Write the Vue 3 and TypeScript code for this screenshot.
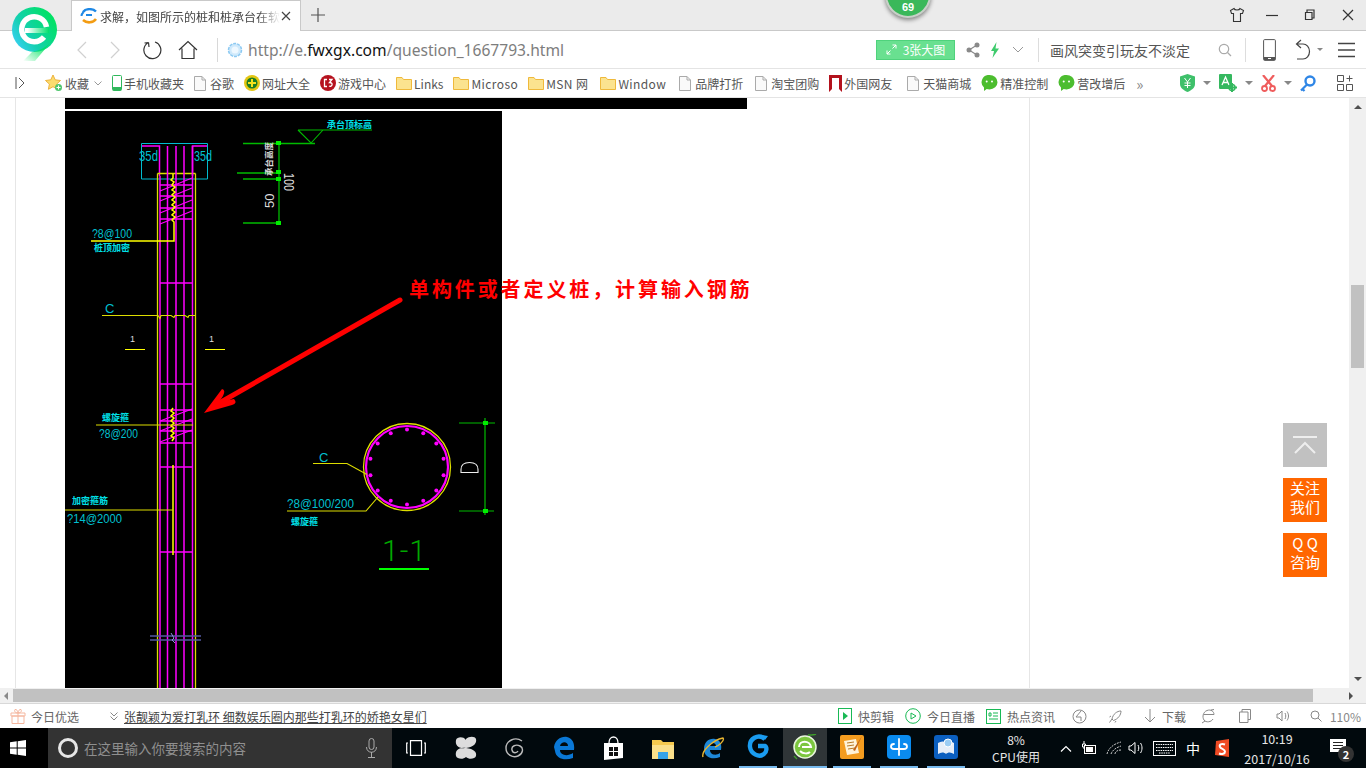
<template>
  <div class="screen">
    <!-- browser tab strip -->
    <header class="tab-strip">
      <div class="tab">
        <svg class="tab-icon" width="18" height="16" viewBox="0 0 18 16">
          <path d="M16 3.5C13 .5 6 0 3 4" fill="none" stroke="#1e88e5" stroke-width="2.4" />
          <path d="M1.5 8c0-2 1-3 2-4M6 7h6" fill="none" stroke="#1e88e5" stroke-width="2" />
          <path d="M3 12c4 3.5 10 3 13-1" fill="none" stroke="#f39c12" stroke-width="2.6" />
        </svg>
        <span class="tab-title">求解，如图所示的桩和桩承台在软</span>
        <svg width="10" height="10" viewBox="0 0 10 10" class="tab-close">
          <path d="M1 1l8 8M9 1l-8 8" stroke="#444" stroke-width="1.2" />
        </svg>
      </div>
      <svg class="tab-add" width="14" height="14" viewBox="0 0 14 14">
        <path d="M7 0v14M0 7h14" stroke="#555" stroke-width="1.2" />
      </svg>
      <div class="window-buttons">
        <svg class="skin" width="16" height="16" viewBox="0 0 16 16">
          <path d="M5 1.5L1.5 3.5l1 3H4.5v8h7v-8h2l1-3L11 1.5c-.5 2-5.5 2-6 0z" fill="none" stroke="#333" stroke-width="1.1" />
        </svg>
        <svg width="12" height="12" viewBox="0 0 12 12"><path d="M0 6.5h12" stroke="#333" stroke-width="1.2" /></svg>
        <svg width="12" height="12" viewBox="0 0 12 12">
          <path d="M3 3V1h7v8H8M1.5 3.5H8v7H1.500z" fill="none" stroke="#333" stroke-width="1.2" />
        </svg>
        <svg width="12" height="12" viewBox="0 0 12 12"><path d="M1 1l10 10M11 1L1 11" stroke="#333" stroke-width="1.2" /></svg>
      </div>
    </header>

    <!-- address bar -->
    <div class="address-bar">
      <div class="nav-buttons">
        <svg width="12" height="18" viewBox="0 0 12 18"><path d="M10 1L2 9l8 8" fill="none" stroke="#d0d0d0" stroke-width="1.2" /></svg>
        <svg width="12" height="18" viewBox="0 0 12 18"><path d="M2 1l8 8-8 8" fill="none" stroke="#d0d0d0" stroke-width="1.2" /></svg>
        <svg width="20" height="20" viewBox="0 0 20 20">
          <path d="M6.5 2.500A8.5 8.5 0 1 0 13 2M6.5 2.500L7 7M6.5 2.500L2.500 3" fill="none" stroke="#333" stroke-width="1.2" />
        </svg>
        <svg class="home" width="20" height="20" viewBox="0 0 20 20">
          <path d="M1 10l9-8.5 9 8.500M4 8.500V18.500h12V8.500" fill="none" stroke="#333" stroke-width="1.2" />
        </svg>
      </div>
      <div class="url-box">
        <svg width="16" height="16" viewBox="0 0 16 16">
          <circle cx="8" cy="8" r="6.5" fill="#cfe9fb" stroke="#8cc9f2" stroke-width="1.5" stroke-dasharray="3 1" />
          <circle cx="8" cy="8" r="3.5" fill="#eef8ff" />
        </svg>
        <span class="url"><span class="url-dim">http://e.</span><span class="url-host">fwxgx.com</span><span class="url-dim">/question_1667793.html</span></span>
      </div>
      <div class="big-image">
        <svg width="11" height="11" viewBox="0 0 11 11"><path d="M6.5 1H10v3.500M10 1L6.500 4.500M4.500 10H1V6.500M1 10l3.500-3.500" fill="none" stroke="#fff" /></svg>
        <span>3张大图</span>
      </div>
      <svg class="share" width="14" height="16" viewBox="0 0 14 16">
        <circle cx="11" cy="3" r="2.5" fill="#8a8a8a" /><circle cx="3" cy="8" r="2.5" fill="#8a8a8a" /><circle cx="11" cy="13" r="2.5" fill="#8a8a8a" />
        <path d="M11 3L3 8l8 5" fill="none" stroke="#8a8a8a" stroke-width="1.2" />
      </svg>
      <svg class="bolt" width="10" height="16" viewBox="0 0 10 16"><path d="M6.500 0L1 9h3L2.500 16 9 6.500H5.500z" fill="#3ecb6c" /></svg>
      <svg class="chev" width="12" height="7" viewBox="0 0 12 7"><path d="M1 1l5 5 5-5" fill="none" stroke="#999" /></svg>
      <div class="search-text">画风突变引玩友不淡定</div>
      <svg class="magnifier" width="14" height="14" viewBox="0 0 14 14">
        <circle cx="6" cy="6" r="4.7" fill="none" stroke="#aaa" stroke-width="1.2" /><path d="M9.500 9.500L13 13" stroke="#aaa" stroke-width="1.2" />
      </svg>
      <div class="tool-sep"></div>
      <svg class="phone" width="13" height="22" viewBox="0 0 13 22">
        <rect x=".6" y=".6" width="11.8" height="20.8" rx="1" fill="none" stroke="#555" stroke-width="1" />
        <path d="M1 18h11v3H1z" fill="#555" /><rect x="5" y="19" width="3" height="1" fill="#fff" />
      </svg>
      <svg class="undo" width="18" height="22" viewBox="0 0 18 22">
        <path d="M7 1L2.500 5 7 9M2.500 5H9a6.500 7.500 0 0 1 0 15H3" fill="none" stroke="#444" stroke-width="1.2" />
      </svg>
      <span class="caret small"></span>
      <svg class="menu" width="17" height="16" viewBox="0 0 17 16"><path d="M0 1.500h17M0 8h17M0 14.500h17" stroke="#444" stroke-width="1.3" /></svg>
    </div>

    <!-- bookmarks -->
    <nav class="bookmarks">
      <svg class="expand" width="10" height="12" viewBox="0 0 10 12"><path d="M1 0v12M4 1l5 5-5 5" fill="none" stroke="#555" /></svg>
      <div v-for="mark in marks" :key="mark.label" class="mark" :class="mark.kind">
        <svg v-if="mark.kind === 'star'" width="18" height="18" viewBox="0 0 18 18">
          <path d="M8 1l2.200 4.800 5.300.7-3.900 3.600 1 5.200L8 12.700l-4.600 2.600 1-5.200L.5 6.500l5.300-.7z" fill="#fbdc6f" stroke="#edb23c" />
          <circle cx="13.5" cy="13.5" r="3.5" fill="#4fc66d" /><path d="M13.500 11.500v4M11.500 13.500h4" stroke="#fff" />
        </svg>
        <svg v-else-if="mark.kind === 'phone-mark'" width="10" height="16" viewBox="0 0 10 16">
          <rect x=".5" y=".5" width="9" height="15" rx="1" fill="none" stroke="#30b85c" /><path d="M1 12h8v3.500H1z" fill="#30b85c" />
        </svg>
        <svg v-else-if="mark.kind === 'doc'" width="12" height="15" viewBox="0 0 12 15">
          <path d="M.5.500H8L11.500 4v10.500H.5z" fill="#fafafa" stroke="#aaa" /><path d="M8 .5V4h3.500" fill="none" stroke="#aaa" />
        </svg>
        <svg v-else-if="mark.kind === 'yellow'" width="16" height="16" viewBox="0 0 16 16">
          <circle cx="8" cy="8" r="8" fill="#e3c613" /><circle cx="8" cy="8" r="5.5" fill="#1d7d22" /><path d="M8 4v8M4 8h8" stroke="#f6e21b" stroke-width="2" />
        </svg>
        <svg v-else-if="mark.kind === 'game'" width="16" height="16" viewBox="0 0 16 16">
          <circle cx="8" cy="8" r="8" fill="#b6131f" /><path d="M7 4.500H4.500v7H7M9 4.500h3L9.500 7.500c2 0 3 1 2.500 2.500s-2 1.500-3 1" fill="none" stroke="#fff" stroke-width="1.3" />
        </svg>
        <svg v-else-if="mark.kind === 'folder'" width="16" height="14" viewBox="0 0 16 14">
          <path d="M.5 1.500h5.500l1.500 2h8v10H.5z" fill="#fbe38f" stroke="#efb93b" />
        </svg>
        <svg v-else-if="mark.kind === 'ribbon'" width="13" height="17" viewBox="0 0 13 17">
          <path d="M0 0h13v17l-3-3V3H3v11l-3 3z" fill="#b3121d" />
        </svg>
        <svg v-else-if="mark.kind === 'chat'" width="17" height="16" viewBox="0 0 17 16">
          <path d="M8.500 0a8 7.200 0 0 1 0 14.400c-1 0-2-.2-2.800-.5L3 16v-3.500A7.200 7.200 0 0 1 8.500 0z" fill="#4cbd2f" />
          <circle cx="5.7" cy="6.5" r="1" fill="#fff" /><circle cx="11" cy="6.5" r="1" fill="#fff" />
        </svg>
        <span>{{ mark.label }}</span>
        <svg v-if="mark.kind === 'star'" class="mark-chev" width="8" height="5" viewBox="0 0 8 5"><path d="M.5.500L4 4 7.500.5" fill="none" stroke="#999" /></svg>
      </div>
      <span class="more">»</span>
      <div class="plugins">
        <svg width="15" height="18" viewBox="0 0 15 18"><path d="M7.500 0L15 2.500V10c0 4-4 6.500-7.500 8C4 16.500 0 14 0 10V2.500z" fill="#3ec06a" /><path d="M4.500 4l3 4 3-4M7.500 8v6M4.500 9h6M4.500 11.500h6" fill="none" stroke="#fff" /></svg>
        <span class="caret"></span>
        <svg width="18" height="18" viewBox="0 0 18 18"><rect width="13" height="15" rx="1" fill="#35b85f" /><path d="M3 11l3.500-8L10 11M4.500 8.500h4" fill="none" stroke="#fff" stroke-width="1.3" /><path d="M13 9v9M9 13.500h9" stroke="#35b85f" stroke-width="2" /><circle cx="13" cy="13.5" r="3" fill="none" stroke="#35b85f" stroke-width="1.5" /></svg>
        <span class="caret"></span>
        <svg width="15" height="17" viewBox="0 0 15 17"><path d="M2 0l9 11M13 0L4 11" stroke="#ef5d5d" stroke-width="2.2" /><circle cx="3.5" cy="13.5" r="2.5" fill="none" stroke="#ef5d5d" stroke-width="1.8" /><circle cx="11.5" cy="13.5" r="2.5" fill="none" stroke="#ef5d5d" stroke-width="1.8" /></svg>
        <span class="caret"></span>
        <svg width="16" height="17" viewBox="0 0 16 17"><circle cx="10" cy="6" r="4.5" fill="none" stroke="#2f86e6" stroke-width="2.4" /><path d="M7 9.500L1 15.500M2.500 14l2 2" stroke="#2f86e6" stroke-width="2.2" /></svg>
        <svg class="grid-icon" width="16" height="16" viewBox="0 0 16 16"><path d="M.5.500h6v6h-6zM.5 9.500h6v6h-6zM9.500 9.500h6v6h-6zM12.500.5v6M9.500 3.500h6" fill="none" stroke="#555" /></svg>
      </div>
    </nav>

    <!-- page viewport -->
    <div class="viewport">
      <main class="page">
        <div class="column">
          <div class="black-strip"></div>
          <div class="figure">
            <svg class="cad" width="437" height="577" viewBox="65 111 437 577" role="img">
              <rect x="65" y="111" width="437" height="577" fill="#000" />

              <!-- cap -->
              <path d="M141.500 143.500h66v35.500h-66z" fill="none" stroke="#00bcd0" />
              <path d="M142 146h17.500v30M207 146h-14.500v30" fill="none" stroke="#f0f" stroke-width="1.5" />
              <text x="139" y="161" class="cad-label cad-35" textLength="19" lengthAdjust="spacingAndGlyphs">35d</text>
              <text x="194" y="161" class="cad-label cad-35" textLength="18" lengthAdjust="spacingAndGlyphs">35d</text>

              <!-- pile body -->
              <path d="M157.500 173.500h38M157.500 173.500V688M195.500 173.500V688" fill="none" stroke="#dddd00" stroke-width="1.3" />
              <path d="M160 176V688M167.500 146V688M176 146V688M184 146V688M192.500 146V688" fill="none" stroke="#f0f" stroke-width="1.5" />
              <path v-for="y in ties" :key="y" :d="`M160 ${y}H193`" stroke="#f0f" stroke-width="1.5" />
              <path v-for="y in [196, 208, 219, 186]" :key="'s' + y" :d="`M160 ${y + 5}L192 ${y - 8}`" stroke="#f0f" stroke-width="1.3" />
              <path v-for="y in [421, 431, 442]" :key="'l' + y" :d="`M160 ${y}L192 ${y - 12}`" stroke="#f0f" stroke-width="1.3" />
              <path d="M173 174v4l-2 2 3 2-2 3 3 2-3 3 3 2-3 3 3 2-3 3 3 2-3 3 3 2-3 3 3 2-3 3 3 2-3 3 2 2V241H91" fill="none" stroke="#ff0" stroke-width="1.5" />
              <path d="M173 408l-2 3 3 2-3 3 3 2-3 3 3 2-3 3 3 2-3 3 3 2-3 3 3 2-2 3M173 465v90" fill="none" stroke="#ff0" stroke-width="1.5" />
              <path d="M102 315.500h56l2 3 1-3h10l3 2 1-2h10l3 2 1-2h6" fill="none" stroke="#dddd00" stroke-width="1.1" />
              <path d="M96 425h97M65 510h108" stroke="#dddd00" stroke-width="1.2" />
              <path d="M150 636h51M150 640h51" stroke="#5458a0" stroke-width="1.3" />
              <path d="M171 633l3 5-2 2 3 3" fill="none" stroke="#8c8ce0" />

              <!-- pile labels -->
              <text x="92" y="238" class="cad-label" textLength="40" lengthAdjust="spacingAndGlyphs">?8@100</text>
              <text x="94" y="251" class="cad-cjk">桩顶加密</text>
              <text x="105" y="313" class="cad-label">C</text>
              <text x="130" y="342" class="cad-one">1</text>
              <text x="209" y="342" class="cad-one">1</text>
              <path d="M125 349.500h20M205 349.500h20" stroke="#ff0" />
              <text x="102" y="421" class="cad-cjk">螺旋箍</text>
              <text x="99" y="438" class="cad-label" textLength="39" lengthAdjust="spacingAndGlyphs">?8@200</text>
              <text x="72" y="504" class="cad-cjk">加密箍筋</text>
              <text x="67" y="523" class="cad-label" textLength="55" lengthAdjust="spacingAndGlyphs">?14@2000</text>

              <!-- top dimensions -->
              <path d="M298 130h74M298 130l13 13 12-13" fill="none" stroke="#0b0" stroke-width="1.1" />
              <path d="M243 143.500h72M237 173h43M243 179h37M243 223h37M279 141v83" fill="none" stroke="#0b0" stroke-width="1.3" />
              <path d="M276 141h5v4h-5zM276 170h5v4h-5zM276 177h5v4h-5zM276 221h5v4h-5z" fill="#0e0" />
              <text x="327" y="128" class="cad-cjk">承台顶标高</text>
              <text transform="translate(272 176) rotate(-90)" class="cad-white small">承台高度</text>
              <text transform="translate(284 173) rotate(90)" class="cad-white big" textLength="18" lengthAdjust="spacingAndGlyphs">100</text>
              <text transform="translate(274 208) rotate(-90)" class="cad-white">50</text>

              <!-- section 1-1 -->
              <circle cx="407" cy="467" r="43.5" fill="none" stroke="#dddd00" stroke-width="1.3" />
              <circle cx="407" cy="467" r="41" fill="none" stroke="#f0f" stroke-width="2.2" />
              <circle v-for="dot in bars" :key="dot.a" :cx="dot.x" :cy="dot.y" r="2" fill="#f0f" />
              <path d="M313 463.500h34l20 11M287 511h79l12-14" fill="none" stroke="#dddd00" stroke-width="1.1" />
              <text x="319" y="462" class="cad-label">C</text>
              <text x="287" y="508" class="cad-label" textLength="67" lengthAdjust="spacingAndGlyphs">?8@100/200</text>
              <text x="291" y="525" class="cad-cjk">螺旋箍</text>
              <text x="382" y="561" class="cad-title" textLength="44">1-1</text>
              <path d="M379 569h50" stroke="#0f0" stroke-width="2" />
              <path d="M459 423h36M459 511h35M485 418v97" fill="none" stroke="#0b0" stroke-width="1.2" />
              <path d="M483 421h5v4h-5zM483 509h5v4h-5z" fill="#0e0" />
              <path d="M461 472.500h17v-3c0-5-4-7-8.500-7s-8.500 2-8.500 7z" fill="none" stroke="#eee" stroke-width="1.1" />

              <!-- hand drawn arrow -->
              <path d="M400 300L214 406" stroke="#f00" stroke-width="5" stroke-linecap="round" />
              <path d="M204 413L222 389Q226 390 223 396L219 402L234 399Q238 403 232 405Z" fill="#f00" />
            </svg>
            <div class="note">单构件或者定义桩，计算输入钢筋</div>
          </div>
        </div>
      </main>

      <aside class="side-actions">
        <div class="action to-top">
          <svg width="24" height="18" viewBox="0 0 24 18"><path d="M0 1h24M2 17L12 7l10 10" fill="none" stroke="#eee" stroke-width="2" /></svg>
        </div>
        <div class="action">关注<br />我们</div>
        <div class="action">Q Q<br />咨询</div>
      </aside>

      <div class="v-scroll">
        <span class="arrow up"></span>
        <div class="v-track"><div class="v-thumb"></div></div>
        <span class="arrow down"></span>
      </div>
    </div>

    <div class="h-scroll">
      <span class="arrow left"></span>
      <div class="h-track"><div class="h-thumb"></div></div>
      <span class="arrow right"></span>
    </div>

    <!-- browser status bar -->
    <footer class="status-bar">
      <svg class="gift" width="16" height="16" viewBox="0 0 16 16"><path d="M1 5h14v3H1zM2 8h12v7.500H2zM8 5v10.500M8 5C5 5 4 3 5 1.500 6.500 1 8 3 8 5c0-2 1.500-4 3-3.500C12 3 11 5 8 5z" fill="none" stroke="#f5b79f" /></svg>
      <span class="today">今日优选</span>
      <svg class="news-chev" width="8" height="9" viewBox="0 0 8 9"><path d="M.5.500L4 4 7.500.5M.5 4.500L4 8l3.500-3.500" fill="none" stroke="#888" /></svg>
      <a class="headline">张靓颖为爱打乳环 细数娱乐圈内那些打乳环的娇艳女星们</a>
      <div class="status-tools">
        <div class="tool">
          <svg width="14" height="16" viewBox="0 0 14 16"><rect x=".5" y=".5" width="13" height="15" fill="none" stroke="#19b955" /><path d="M5 4l5 4-5 4z" fill="#19b955" /></svg>
          <span>快剪辑</span>
        </div>
        <div class="tool">
          <svg width="16" height="16" viewBox="0 0 16 16"><circle cx="8" cy="8" r="7.3" fill="none" stroke="#19b955" /><path d="M6 5l5 3-5 3z" fill="none" stroke="#19b955" /></svg>
          <span>今日直播</span>
        </div>
        <div class="tool">
          <svg width="15" height="15" viewBox="0 0 15 15"><rect x=".5" y=".5" width="14" height="14" fill="none" stroke="#19b955" /><path d="M3 4h2v3H3zM7 4h5M7 7h5M3 10h9" fill="none" stroke="#19b955" /></svg>
          <span>热点资讯</span>
        </div>
        <svg class="st-a" width="15" height="15" viewBox="0 0 15 15"><circle cx="7.5" cy="7.5" r="6.5" fill="none" stroke="#888" /><path d="M9 2L4 8h5V12" fill="none" stroke="#888" /></svg>
        <svg class="st-b" width="15" height="15" viewBox="0 0 15 15"><path d="M13 2C9 2 5 5 4 10l1.500 1.500C10 10 13 6 13 2zM4 10l-2.500 3.500M3 7l-1.500 1M8 12l-1 1.500" fill="none" stroke="#888" /></svg>
        <div class="tool download">
          <svg width="12" height="14" viewBox="0 0 12 14"><path d="M6 0v13M1 8l5 5 5-5" fill="none" stroke="#888" /></svg>
          <span>下载</span>
        </div>
        <svg class="st-c" width="14" height="15" viewBox="0 0 14 15"><path d="M12 10c-1.500 3-7 4-9 1-2-3-1-8 3-9.500s7 1 7 4H2.500M10 1l3-.5M1 14l3-2" fill="none" stroke="#888" /></svg>
        <svg class="st-d" width="12" height="14" viewBox="0 0 12 14"><path d="M3 3V.5h8.500v10H9M.5 3h8.500v10.500H.5z" fill="none" stroke="#888" /></svg>
        <svg class="st-e" width="14" height="14" viewBox="0 0 14 14"><path d="M1 5v4h2l3 3V2L3 5zM9 4c1 2 1 4 0 6M11 2.500c2 3 2 6 0 9" fill="none" stroke="#888" /></svg>
        <svg class="st-f" width="12" height="12" viewBox="0 0 12 12"><circle cx="5" cy="5" r="4" fill="none" stroke="#888" /><path d="M8 8l3.500 3.500" stroke="#888" /></svg>
        <span class="zoom">110%</span>
      </div>
    </footer>

    <!-- windows taskbar -->
    <footer class="taskbar">
      <div class="start">
        <svg width="16" height="16" viewBox="0 0 16 16"><path d="M0 2.300L6.700 1.300V7.500H0zM7.700 1.200L16 0v7.500H7.700zM0 8.500H6.700V14.700L0 13.700zM7.700 8.500H16V16L7.700 14.800z" fill="#fff" /></svg>
      </div>
      <div class="search-box">
        <span class="cortana"></span>
        <span class="search-hint">在这里输入你要搜索的内容</span>
        <svg class="mic" width="11" height="20" viewBox="0 0 11 20"><rect x="3" y=".5" width="5" height="11" rx="2.5" fill="none" stroke="#aaa" /><path d="M.5 9c0 7 10 7 10 0M5.500 14v5M2 19.500h7" fill="none" stroke="#aaa" /></svg>
      </div>
      <div class="task-icons">
        <div class="task view"><svg width="20" height="16" viewBox="0 0 20 16"><path d="M4.500.7h11v14.600h-11zM2 3H.7v10H2M18 3h1.300v10H18" fill="none" stroke="#fff" stroke-width="1.2" /></svg></div>
        <div class="task"><svg width="22" height="24" viewBox="0 0 22 24"><path d="M11 12C3 13 0 9 1 4c1-3 7-4 10 0zM11 12c8-1 11-5 10-9-1-3-7-3-10 0zM11 12c-8-1-11 3-10 8 1 3 7 4 10 1zM11 12c8 1 11 4 10 8-1 3-7 4-10 1z" fill="#ddd" /></svg></div>
        <div class="task"><svg width="20" height="22" viewBox="0 0 20 22"><path d="M17 4C10-1 1 4 1 11s7 10 12 8 6-8 2-10-9 0-8 4 5 3 6 1" fill="none" stroke="#bbb" stroke-width="1.4" /></svg></div>
        <div class="task"><svg width="22" height="24" viewBox="0 0 22 24"><path d="M1 11C2 4 8 0 14 1c5 1 8 6 7 13H7c0 5 7 7 13 3v5c-8 3-17 1-18-7zM7 10h8c0-5-7-5-8 0z" fill="#0a78d6" /></svg></div>
        <div class="task"><svg width="21" height="25" viewBox="0 0 21 25"><path d="M6 7c0-8 9-8 9 0" fill="none" stroke="#fff" stroke-width="1.3" /><path d="M1 7h19v15L1 24z" fill="#fff" /><path d="M6 11h4v4H6zM11 11h4v4h-4zM6 16h4v4H6zM11 16h4v4h-4z" fill="#111" /></svg></div>
        <div class="task"><svg width="22" height="22" viewBox="0 0 22 22"><path d="M0 3h9l2 2h11v17H0z" fill="#f5c94e" /><path d="M0 8h22v14H0z" fill="#fbe08a" /><path d="M6 15h10v7H6z" fill="#37a3e8" /></svg></div>
        <div class="task"><svg width="24" height="24" viewBox="0 0 24 24"><path d="M3 13C3 6 8 2 14 3c5 1 7 5 6 11H9c0 5 6 6 10 3v4c-7 3-16 1-16-8zM9 10h6c0-4-6-4-6 0z" fill="#1e88d8" /><path d="M2 21C0 15 12 4 22 2c2 2-4 8-8 9" fill="none" stroke="#e8b531" stroke-width="1.4" /></svg></div>
        <div class="task running first">
          <svg width="24" height="26" viewBox="0 0 24 26">
            <path d="M19 5C12-1 3 5 4 13c1 7 9 11 14 7 3-2 3-7 1-8h-7" fill="none" stroke="#1a9cf0" stroke-width="4.4" />
            <path d="M16 1l6 1-3 4z" fill="#1a9cf0" />
          </svg>
        </div>
        <div class="task running active">
          <svg width="24" height="26" viewBox="0 0 24 26">
            <circle cx="12" cy="13" r="11" fill="#7cc63f" /><circle cx="12" cy="13" r="11" fill="none" stroke="#e8f5dc" stroke-width="1.5" />
            <path d="M6 13c0-7 11-7 12 0H9M7 17c3 3 8 3 10 1" fill="none" stroke="#fff" stroke-width="2" />
            <path d="M15 1c3 0 6 0 8-1M1 22l3 3" stroke="#3f9e2c" stroke-width="1.4" />
          </svg>
        </div>
        <div class="task running">
          <svg width="24" height="24" viewBox="0 0 24 24"><rect width="24" height="24" rx="2" fill="#f39c1f" /><path d="M4 6l12-2 3 14-12 2z" fill="#fff3d9" /><path d="M7 8l7-1M7 11l7-1M8 14l7-1" stroke="#b87a2a" /><path d="M22 1l-9 14 2 1z" fill="#c2641a" /></svg>
        </div>
        <div class="task running">
          <svg width="24" height="24" viewBox="0 0 24 24"><rect width="24" height="24" rx="4" fill="#0a8bef" /><path d="M12 4v16M7 9c-4 0-4 5 0 5h10c4 0 4-5 0-5" fill="none" stroke="#fff" stroke-width="1.8" stroke-linecap="round" /></svg>
        </div>
        <div class="task running">
          <svg width="24" height="24" viewBox="0 0 24 24"><rect width="24" height="24" rx="3" fill="#0b5fc0" /><path d="M4 8c3-2 6-2 8 0 2-2 5-2 8 0v11c-3-2-6-2-8 0-2-2-5-2-8 0z" fill="#e6eef8" /><circle cx="14" cy="8" r="4" fill="#9ccdf3" stroke="#fff" /></svg>
        </div>
      </div>
      <div class="cpu">8%<br />CPU使用</div>
      <div class="tray">
        <svg width="12" height="7" viewBox="0 0 12 7"><path d="M1 6.500l5-5 5 5" fill="none" stroke="#fff" stroke-width="1.2" /></svg>
        <svg width="16" height="14" viewBox="0 0 16 14"><path d="M3 0v3M1.500 3h3v3h-3zM3 6v2" fill="none" stroke="#fff" /><rect x="3.500" y="4.500" width="11" height="8" fill="#111" stroke="#fff" /><rect x="5" y="6" width="7" height="5" fill="#fff" /></svg>
        <svg width="16" height="14" viewBox="0 0 16 14"><path d="M1 13C2 8 7 3 15 1M5 13c1-3 4-6 10-8M9 13c0-2 2-4 6-4" fill="none" stroke="#ccc" stroke-dasharray="2 1" /></svg>
        <svg class="volume" width="16" height="14" viewBox="0 0 16 14"><path d="M1 5v4h2l4 3.500v-11L3 5zM10 4c1 2 1 4 0 6M12.500 2c2 3 2 7 0 10" fill="none" stroke="#fff" /></svg>
        <svg width="23" height="15" viewBox="0 0 23 15"><rect x=".5" y=".5" width="22" height="14" fill="none" stroke="#fff" /><path d="M3 3.500h17M3 6.500h17M3 9.500h17M6 12h11" stroke="#fff" stroke-dasharray="1.5 .8" /></svg>
        <span class="ime">中</span>
        <svg width="16" height="18" viewBox="0 0 16 18"><path d="M2 2l13-2v18L1 16z" fill="#ef4a23" /><path d="M11 5.500C7 4 5 6 6 8s5 2 5 4.500-3 3-6 2" fill="none" stroke="#fff" stroke-width="2" /></svg>
      </div>
      <div class="clock">10:19<br />2017/10/16</div>
      <div class="notice">
        <svg width="18" height="18" viewBox="0 0 18 18"><path d="M0 0h16v13H0z" fill="#fff" /><path d="M3 3.500h10M3 6.500h10M3 9.500h10" stroke="#222" /></svg>
        <span class="notice-count">2</span>
      </div>
    </footer>

    <!-- things that sit on top of the chrome -->
    <svg class="logo" width="48" height="58" viewBox="0 0 48 58">
      <defs>
        <linearGradient id="ring" x1=".1" y1=".9" x2="1" y2=".3">
          <stop offset="0" stop-color="#38d0f2" />
          <stop offset=".35" stop-color="#14d0b0" />
          <stop offset="1" stop-color="#00e35f" />
        </linearGradient>
        <linearGradient id="tail" x1="1" y1="0" x2="0" y2="1">
          <stop offset=".3" stop-color="#00e35f" />
          <stop offset="1" stop-color="#00e35f" stop-opacity="0" />
        </linearGradient>
        <linearGradient id="bar" x1="0" y1="0" x2="1" y2="0">
          <stop offset=".1" stop-color="#fff" />
          <stop offset="1" stop-color="#00e06c" />
        </linearGradient>
      </defs>
      <circle cx="23.5" cy="23.5" r="22.5" fill="url(#ring)" />
      <path d="M45 30L24 55H12L21 46C32 44 40 38 45 30z" fill="url(#tail)" />
      <path d="M33 31A12.500 12.500 0 1 1 35.500 21" fill="none" stroke="#fff" stroke-width="5.5" />
      <rect x="14" y="22" width="24" height="5" fill="url(#bar)" />
    </svg>

    <div class="score">
      <span>69</span>
    </div>
  </div>
</template>

<script setup lang="ts">
interface Mark {
  label: string
  kind: string
}

// bookmark row, left to right
const marks: Mark[] = [
  { label: '收藏', kind: 'star' },
  { label: '手机收藏夹', kind: 'phone-mark' },
  { label: '谷歌', kind: 'doc' },
  { label: '网址大全', kind: 'yellow' },
  { label: '游戏中心', kind: 'game' },
  { label: 'Links', kind: 'folder' },
  { label: 'Microso', kind: 'folder' },
  { label: 'MSN 网', kind: 'folder' },
  { label: 'Window', kind: 'folder' },
  { label: '品牌打折', kind: 'doc' },
  { label: '淘宝团购', kind: 'doc' },
  { label: '外国网友', kind: 'ribbon' },
  { label: '天猫商城', kind: 'doc' },
  { label: '精准控制', kind: 'chat' },
  { label: '营改增后', kind: 'chat' },
]

// horizontal ties of the pile, in page coordinates
const ties = [185, 196, 208, 219, 283, 384, 410, 421, 431, 443, 467, 552]

// longitudinal bars round the section
const bars = Array.from({ length: 14 }, (_, i) => {
  const a = (i * 2 * Math.PI) / 14
  return { a, x: 407 + 37.5 * Math.sin(a), y: 467 - 37.5 * Math.cos(a) }
})
</script>

<style scoped>
.screen {
  position: relative;
  width: 1366px;
  height: 768px;
  overflow: hidden;
  background: #fff;
  display: flex;
  flex-direction: column;
  font-family: "Noto Sans CJK SC", "Noto Sans", sans-serif;
  font-size: 12px;
  color: #555;
}

svg {
  display: block;
  flex: none;
}

/* tab strip */
.tab-strip {
  height: 30px;
  flex: none;
  display: flex;
  align-items: flex-end;
  padding-left: 71px;
  background: #ebebeb;
  border-bottom: 1px solid #c9c9c9;
}

.tab {
  width: 230px;
  height: 31px;
  margin-bottom: -1px;
  box-sizing: border-box;
  display: flex;
  align-items: center;
  padding: 0 9px 0 8px;
  background: #fff;
  border: 1px solid #c9c9c9;
  border-bottom: none;
}

.tab-title {
  width: 180px;
  margin-left: 2px;
  white-space: nowrap;
  color: #444;
  font-size: 12px;
  -webkit-mask-image: linear-gradient(90deg, #000 88%, transparent);
  mask-image: linear-gradient(90deg, #000 88%, transparent);
}

.tab-close {
  margin-left: auto;
}

.tab-add {
  margin: 0 0 8px 10px;
}

.window-buttons {
  margin-left: auto;
  height: 30px;
  display: flex;
  align-items: center;
  gap: 26px;
  padding-right: 12px;
}

.skin {
  margin-right: -5px;
}

/* address bar */
.address-bar {
  height: 37px;
  flex: none;
  display: flex;
  align-items: center;
  border-bottom: 1px solid #e4e4e4;
  background: #fff;
}

.nav-buttons {
  display: flex;
  align-items: center;
  margin-left: 76px;
  gap: 21px;
  width: 141px;
}

.home {
  margin-left: -5px;
}

.url-box {
  width: 638px;
  height: 24px;
  display: flex;
  align-items: center;
  gap: 5px;
  padding-left: 9px;
  box-sizing: border-box;
  border-left: 1px solid #d8d8d8;
}

.url {
  font-family: "Noto Sans", sans-serif;
  font-size: 15.6px;
  white-space: nowrap;
}

.url-dim {
  color: #7d7d7d;
}

.url-host {
  color: #111;
}

.big-image {
  width: 79px;
  height: 20px;
  margin-left: 21px;
  box-sizing: border-box;
  display: flex;
  align-items: center;
  justify-content: center;
  gap: 6px;
  background: #69e090;
  border: 1px solid #4fd27c;
  color: #fff;
  font-size: 12px;
}

.share {
  margin-left: 11px;
}

.bolt {
  margin-left: 10px;
}

.chev {
  margin-left: 12px;
}

.search-text {
  margin-left: 14px;
  padding-left: 11px;
  width: 141px;
  border-left: 1px solid #ddd;
  color: #555;
  font-size: 14px;
  line-height: 24px;
  white-space: nowrap;
}

.magnifier {
  margin-left: 27px;
}

.tool-sep {
  width: 1px;
  height: 24px;
  margin-left: 13px;
  background: #ddd;
}

.phone {
  margin-left: 17px;
}

.undo {
  margin-left: 18px;
}

.caret {
  width: 0;
  height: 0;
  border: 4px solid transparent;
  border-top-color: #888;
  border-bottom: none;
  flex: none;
}

.caret.small {
  margin-left: 5px;
  border-width: 3px;
  border-bottom: none;
}

.menu {
  margin-left: 15px;
}

/* bookmarks */
.bookmarks {
  height: 28px;
  flex: none;
  display: flex;
  align-items: center;
  padding-left: 15px;
  border-bottom: 1px solid #e4e4e4;
  background: #fff;
}

.expand {
  margin-right: 20px;
}

.mark {
  display: flex;
  flex: none;
  align-items: center;
  gap: 2px;
  margin-right: 10px;
  white-space: nowrap;
  font-size: 12px;
}

.mark-chev {
  margin-left: 3px;
}

.mark.doc {
  gap: 4px;
}

.mark.folder {
  letter-spacing: 0.4px;
}

/* the row is not evenly spaced in the reference */
.mark:nth-of-type(6) {
  letter-spacing: 0;
}

.mark:nth-of-type(8),
.mark:nth-of-type(10) {
  margin-right: 12px;
}

.mark:nth-of-type(9) {
  margin-right: 13px;
}

.mark:nth-of-type(12) {
  margin-right: 15px;
}

.more {
  color: #888;
  font-size: 15px;
  margin-left: 1px;
}

.plugins {
  margin-left: auto;
  display: flex;
  align-items: center;
  gap: 8px;
  padding-right: 13px;
}

.grid-icon {
  margin-left: 13px;
}

/* page area */
.viewport {
  flex: 1;
  min-height: 0;
  display: flex;
  position: relative;
  background: #fff;
}

.page {
  flex: 1;
  min-width: 0;
  overflow: hidden;
}

.column {
  width: 964px;
  height: 100%;
  margin-left: 15px;
  padding-left: 49px;
  border-left: 1px solid #e6e6e6;
  border-right: 1px solid #e6e6e6;
}

.black-strip {
  width: 682px;
  height: 11px;
  background: #000;
}

.figure {
  position: relative;
  margin-top: 2px;
}

.note {
  position: absolute;
  left: 344px;
  top: 165px;
  white-space: nowrap;
  color: #f00;
  font-size: 20px;
  font-weight: 700;
  letter-spacing: 2.9px;
  line-height: 26px;
}

.cad-label {
  fill: #00c0d0;
  font-family: "Liberation Sans", sans-serif;
  font-size: 13px;
}

.cad-35 {
  font-size: 15px;
}

.cad-cjk {
  fill: #00e0e8;
  font-size: 9px;
  font-weight: 700;
}

.cad-one {
  fill: #ddd;
  font-family: "Liberation Sans", sans-serif;
  font-size: 9px;
}

.cad-white {
  fill: #ddd;
  font-family: "Liberation Sans", sans-serif;
  font-size: 13px;
}

.cad-white.big {
  font-size: 15px;
}

.cad-white.small {
  font-family: "Noto Sans CJK SC", sans-serif;
  font-size: 8.5px;
  font-weight: 700;
}

.cad-title {
  fill: #00a800;
  font-family: "Roboto", "Liberation Sans", sans-serif;
  font-size: 30px;
  font-weight: 300;
}

/* floating buttons */
.side-actions {
  position: absolute;
  left: 1283px;
  top: 325px;
  display: flex;
  flex-direction: column;
  gap: 11px;
}

.action {
  width: 44px;
  height: 44px;
  box-sizing: border-box;
  background: #ff6600;
  color: #fff;
  font-size: 15px;
  line-height: 19px;
  text-align: center;
}

.to-top {
  display: flex;
  align-items: center;
  justify-content: center;
  padding: 0;
  background: #c1c1c1;
}

/* scrollbars */
.v-scroll {
  width: 17px;
  flex: none;
  display: flex;
  flex-direction: column;
  align-items: center;
  background: #f0f0f0;
}

.v-track {
  flex: 1;
  width: 100%;
  padding-top: 172px;
  box-sizing: border-box;
}

.v-thumb {
  width: 13px;
  height: 83px;
  margin: 0 auto;
  background: #c1c1c1;
}

.h-scroll {
  height: 15px;
  flex: none;
  display: flex;
  align-items: center;
  background: #f0f0f0;
  border-bottom: 1px solid #d8d8d8;
}

.h-track {
  flex: 1;
  padding: 0 36px 0 0;
}

.h-thumb {
  height: 13px;
  width: 1300px;
  background: #c1c1c1;
}

.arrow {
  width: 0;
  height: 0;
  flex: none;
  border: 4px solid transparent;
}

.arrow.up {
  margin: 7px 0 4px;
  border-top: none;
  border-bottom-color: #505050;
}

.arrow.down {
  margin: 4px 0 7px;
  border-bottom: none;
  border-top-color: #505050;
}

.arrow.left {
  margin: 0 5px 0 4px;
  border-left: none;
  border-right-color: #8a8a8a;
}

.arrow.right {
  margin: 0 15px 0 0;
  border-right: none;
  border-left-color: #505050;
}

/* status bar */
.status-bar {
  height: 24px;
  flex: none;
  display: flex;
  align-items: center;
  background: #fff;
  padding-left: 10px;
  color: #666;
}

.today {
  margin-left: 5px;
  width: 48px;
  white-space: nowrap;
}

.news-chev {
  margin-left: 31px;
}

.headline {
  margin-left: 6px;
  color: #444;
  text-decoration: underline;
  white-space: nowrap;
}

.status-tools {
  margin-left: auto;
  display: flex;
  align-items: center;
  padding-right: 5px;
}

.tool {
  display: flex;
  align-items: center;
  gap: 6px;
  margin-right: 11px;
}

.tool span {
  white-space: nowrap;
}

.st-a {
  margin: 0 0 0 6px;
}

.st-b {
  margin-left: 21px;
}

.download {
  margin: 0 0 0 21px;
  gap: 6px;
}

.st-c {
  margin-left: 15px;
}

.st-d {
  margin-left: 24px;
}

.st-e {
  margin-left: 25px;
}

.st-f {
  margin-left: 20px;
}

.zoom {
  margin-left: 8px;
  color: #888;
}

/* taskbar */
.taskbar {
  height: 40px;
  flex: none;
  display: flex;
  align-items: stretch;
  background: #01090d;
  color: #fff;
}

.start {
  width: 48px;
  background: #000;
  display: flex;
  align-items: center;
  justify-content: center;
  padding-right: 12px;
  box-sizing: border-box;
}

.search-box {
  width: 344px;
  background: #333;
  display: flex;
  align-items: center;
  padding-left: 10px;
  box-sizing: border-box;
}

.cortana {
  width: 20px;
  height: 20px;
  box-sizing: border-box;
  border: 3px solid #e6e6e6;
  border-radius: 50%;
  flex: none;
}

.search-hint {
  margin-left: 6px;
  color: #8f8f8f;
  font-size: 13.5px;
  white-space: nowrap;
}

.mic {
  margin-left: auto;
  margin-right: 15px;
}

.task-icons {
  display: flex;
  width: 582px;
}

.task {
  width: 49.4px;
  display: flex;
  align-items: center;
  justify-content: center;
  box-sizing: border-box;
  flex: none;
}

.task.view {
  width: 48px;
  margin-right: 1px;
}

.task.running {
  width: 38px;
  margin: 0 4.5px;
  border-bottom: 2px solid #76b9ed;
}

.task.running.first {
  margin-left: 2px;
}

.task.running.active {
  width: 44px;
  margin: 0 1.5px;
  background: #2f3537;
}

.cpu {
  width: 56px;
  margin-left: 14px;
  padding-top: 3px;
  text-align: center;
  font-size: 12px;
  line-height: 17px;
  white-space: nowrap;
  color: #e6e6e6;
}

.tray {
  display: flex;
  align-items: center;
  gap: 9px;
  margin-left: 16px;
}

.volume {
  margin-left: -3px;
}

.ime {
  font-size: 14px;
  margin: 0 5px 0 1px;
  color: #fff;
}

.clock {
  width: 70px;
  margin-left: 12px;
  padding-top: 1px;
  text-align: center;
  font-size: 12.5px;
  line-height: 20px;
  white-space: nowrap;
  color: #e6e6e6;
}

.notice {
  position: relative;
  margin-left: 18px;
  padding-top: 11px;
}

.notice-count {
  position: absolute;
  left: 8px;
  top: 18px;
  width: 16px;
  height: 16px;
  border-radius: 50%;
  background: #333;
  color: #fff;
  font-size: 11px;
  font-weight: 700;
  line-height: 16px;
  text-align: center;
}

/* overlays */
.logo {
  position: absolute;
  left: 11px;
  top: 6px;
}

.score {
  position: absolute;
  left: 885px;
  top: -28px;
  width: 46px;
  height: 46px;
  box-sizing: border-box;
  border-radius: 50%;
  background: #3ab85a;
  border: 2px solid #c8d0c8;
  box-shadow: 0 2px 4px rgba(0, 0, 0, 0.45);
  color: #fff;
  font-family: "Liberation Sans", sans-serif;
  font-size: 11px;
  font-weight: 700;
  text-align: center;
  line-height: 12px;
  padding-top: 27px;
}
</style>
